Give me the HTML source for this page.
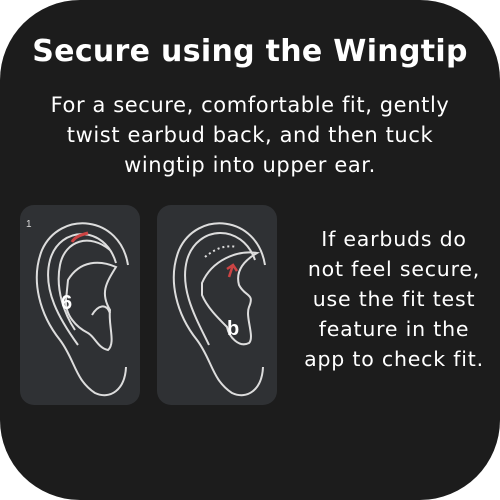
<!DOCTYPE html>
<html><head><style>
html,body{margin:0;padding:0;background:#fff;}
#c{position:absolute;left:0;top:0;width:500px;height:500px;background:#1c1c1c;border-radius:80px;overflow:hidden;font-family:"DejaVu Sans","Liberation Sans",sans-serif;color:#fff;}
h1{position:absolute;left:0;width:500px;top:34px;margin:0;text-align:center;font-size:30px;font-weight:bold;letter-spacing:0.3px;white-space:nowrap;}
.p{position:absolute;left:0;width:500px;top:90px;text-align:center;font-size:21px;line-height:30px;letter-spacing:0.6px;white-space:nowrap;}
.r{position:absolute;left:284px;width:220px;top:224px;text-align:center;font-size:20.5px;line-height:30px;letter-spacing:0.8px;white-space:nowrap;}
.box{position:absolute;top:205px;width:120px;height:200px;background:#2f3134;border-radius:14px;}
</style></head><body>
<div id="c">
<h1>Secure using the Wingtip</h1>
<div class="p">For a secure, comfortable fit, gently<br>twist earbud back, and then tuck<br>wingtip into upper ear.</div>
<div class="box" style="left:20px">
<svg width="120" height="200" viewBox="0 0 120 200" fill="none" stroke="#ddd" stroke-width="2">
<text x="6" y="22" fill="#ddd" stroke="none" font-size="10" font-family="Liberation Sans">1</text>
<path d="M108 60 C100 10 40 5 22 45 C10 75 20 110 40 135 C55 155 55 175 75 188 C90 195 105 185 106 162"/>
<path d="M96 58 C85 20 40 20 30 55 C22 85 40 115 58 140"/>
<path d="M90 45 C70 28 45 35 40 60 C35 85 45 110 55 125"/>
<path d="M48 75 C60 55 80 55 96 62 C86 78 80 88 90 105 C88 120 96 138 88 145 C78 143 75 132 68 128 C56 122 45 110 46 95 Z"/>
<path d="M72 110 C78 100 86 98 90 108"/>
<path d="M68 28 C60 30 55 32 52 37" stroke="#c44" stroke-width="3"/>
<text x="41" y="104" fill="#fff" stroke="none" font-size="20" font-weight="bold" font-family="Liberation Sans">6</text>
</svg></div>
<div class="box" style="left:157px">
<svg width="120" height="200" viewBox="0 0 120 200" fill="none" stroke="#ddd" stroke-width="2">
<path d="M108 60 C100 10 40 5 22 45 C10 75 20 110 40 135 C55 155 55 175 75 188 C90 195 105 185 106 162"/>
<path d="M98 55 C85 18 40 20 30 55 C22 85 40 115 52 140"/>
<path d="M45 78 C55 55 80 45 100 48 C88 55 78 65 82 80 C88 92 98 88 92 102 C88 112 98 132 92 138 C82 143 72 132 70 122 C60 112 50 102 45 90 Z"/>
<path d="M48 52 C60 42 70 40 80 42" stroke-dasharray="2 3"/>
<path d="M72 72 L76 60 M70 64 L76 60 L80 66" stroke="#c44" stroke-width="2.5"/>
<text x="70" y="130" fill="#fff" stroke="none" font-size="20" font-weight="bold" font-family="Liberation Sans">b</text>
</svg></div>
<div class="r">If earbuds do<br>not feel secure,<br>use the fit test<br>feature in the<br>app to check fit.</div>
</div>
</body></html>
